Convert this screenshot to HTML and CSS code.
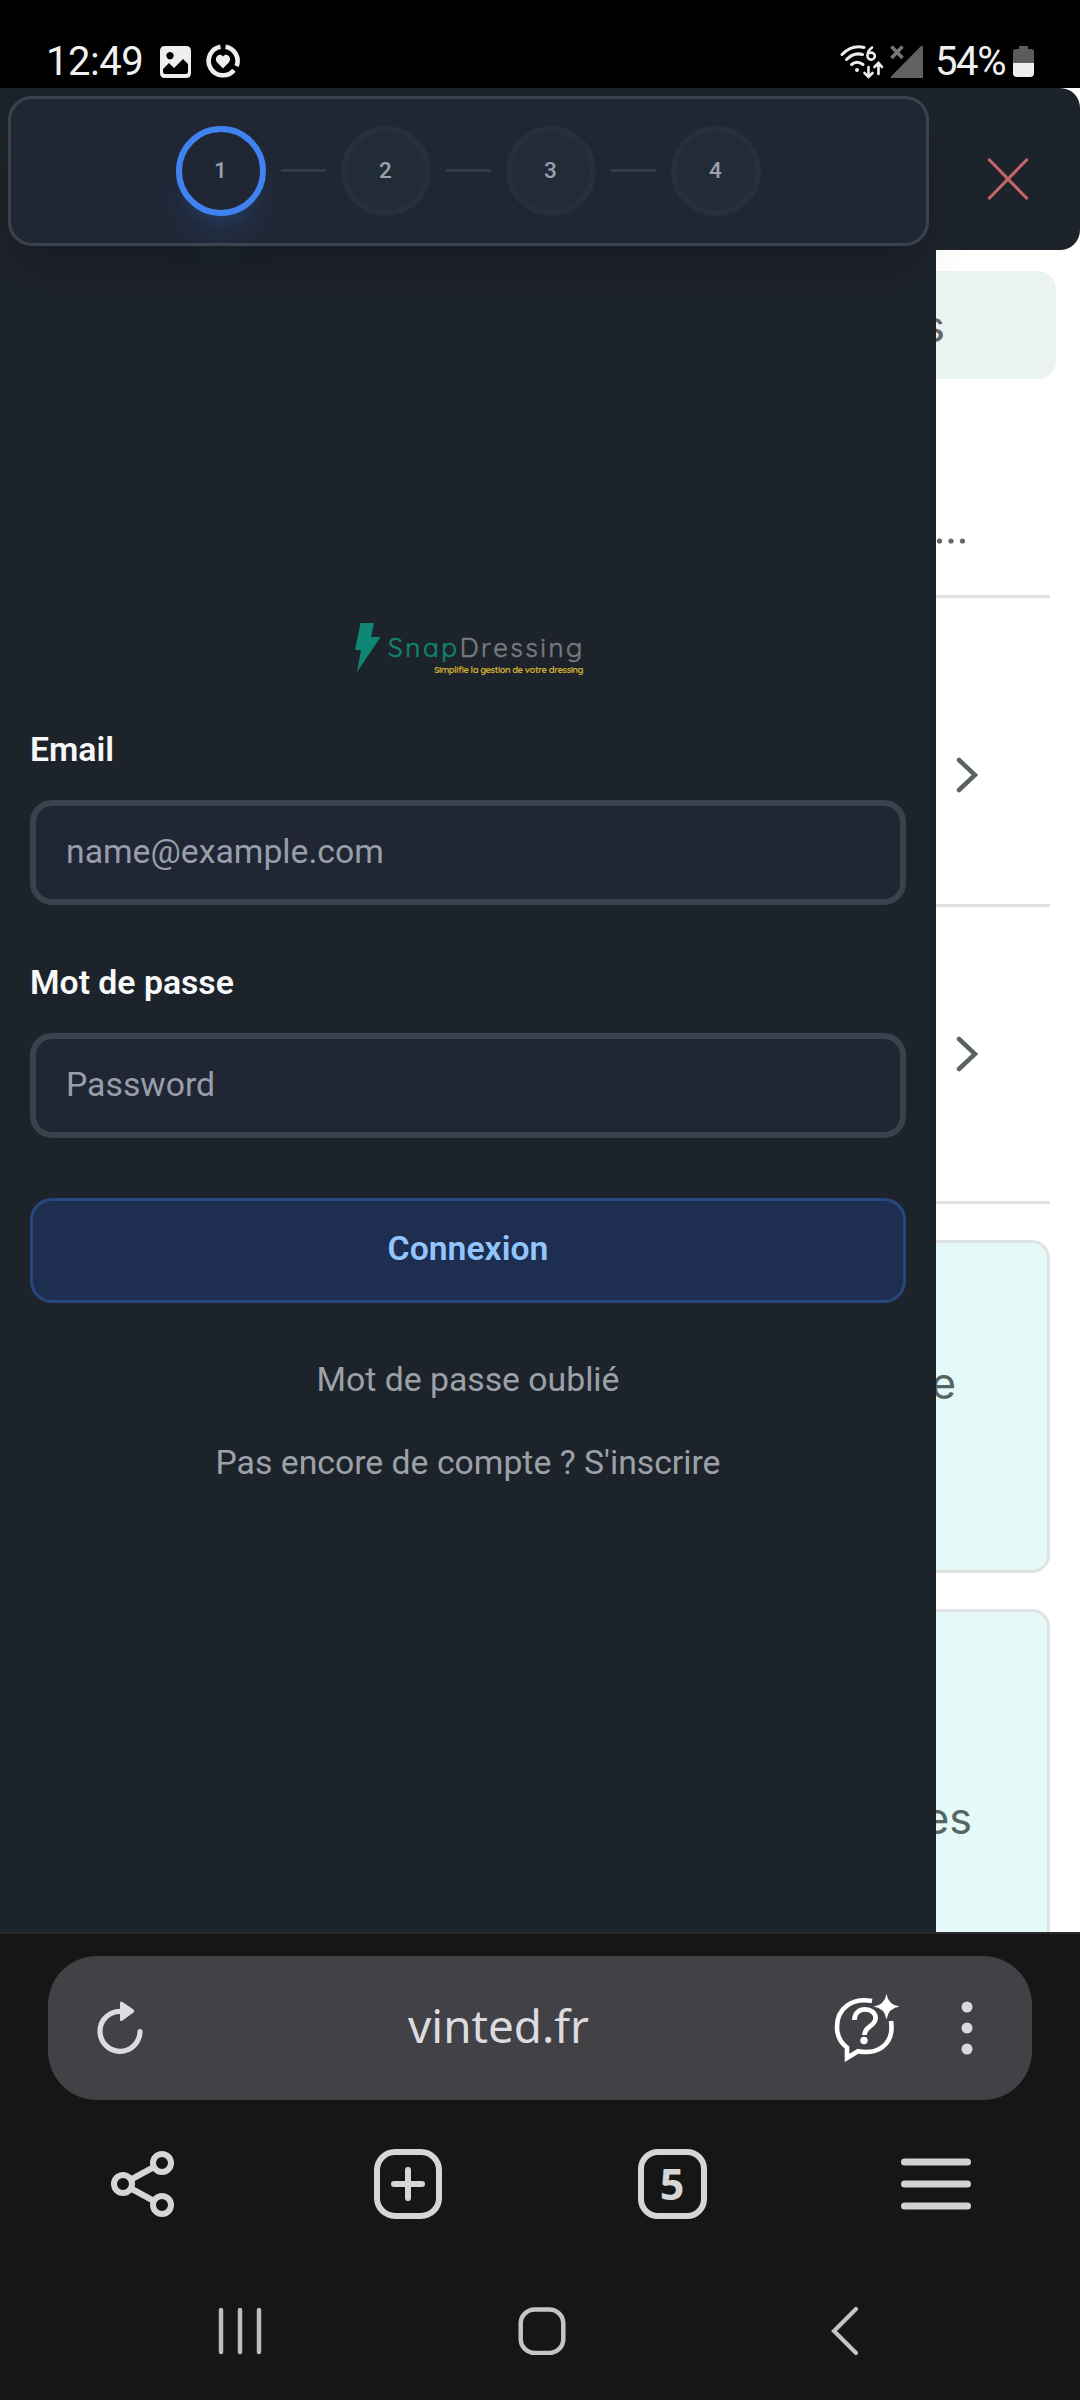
FILE: index.html
```html
<!DOCTYPE html>
<html lang="fr">
<head>
<meta charset="utf-8">
<title>SnapDressing</title>
<link rel="stylesheet" href="styles.css">
</head>
<body>
<div class="status">
  <div class="status-left">
    <span class="clock">12:49</span>
    <svg class="ic-image" width="31" height="32" viewBox="0 0 31 32"><path fill="#eee" fill-rule="evenodd" d="M5 0H26Q31 0 31 5V27Q31 32 26 32H5Q0 32 0 27V5Q0 0 5 0ZM10 6a3.7 3.7 0 1 0 .01 0ZM3 23V26Q3 28 5 28H26Q28 28 28 26V18L23 13L14 22L9 17Z"/></svg>
    <svg class="ic-heart" width="34" height="34" viewBox="0 0 34 34"><g fill="none" stroke="#eee" stroke-width="4.600"><path d="M14.500 2.700A14.400 14.400 0 1 0 28 26.200"/><path d="M19.500 2.700A14.400 14.400 0 0 1 30.600 22.100"/></g><path fill="#eee" d="M17 24.500L11 18.300C7.500 13.500 13.500 8 17 12.500C20.500 8 26.500 13.500 23 18.300Z"/></svg>
  </div>
  <div class="status-right">
    <svg class="ic-wifi" width="44" height="36" viewBox="0 0 44 36"><g fill="none" stroke="#eee" stroke-width="3" stroke-linecap="round"><path d="M2 10.500Q12 .5 24 3.500"/><path d="M6.500 15.500Q14 8 22.500 10.500"/><path d="M11.500 20.500Q17 16 23 20.500"/><path d="M32 3.500Q27.500 7 27.500 11.500A3.700 3.500 0 1 0 29.500 9" stroke-width="2.600"/><path d="M28.500 23V32M24.500 29L28.500 33L32.500 29M38.500 30V20M34.500 23L38.500 19L42 23" stroke-width="2.600"/></g><circle cx="17" cy="26" r="2" fill="#eee"/></svg>
    <svg class="ic-signal" width="33" height="34" viewBox="0 0 33 34"><path fill="#616161" d="M31 1Q33 0 33 2V32Q33 33 32 33H1.500Q0 33 1 31.500Z"/><path d="M1.500 1.500L12.500 13M12.500 1.500L1.500 13" stroke="#777" stroke-width="3.400"/></svg>
    <span class="percent">54%</span>
    <svg class="ic-battery" width="21" height="32" viewBox="0 0 21 32"><path fill="#5c5c5c" d="M6 4V1H15V4H18Q21 4 21 7V18H0V7Q0 4 3 4Z"/><path fill="#eee" d="M0 18H21V28Q21 32 17 32H4Q0 32 0 28Z"/></svg>
  </div>
</div>

<div class="view">
  <div class="drawer">
    <div class="steps">
      <div class="step active">1</div><div class="dash"></div>
      <div class="step">2</div><div class="dash"></div>
      <div class="step">3</div><div class="dash"></div>
      <div class="step">4</div>
    </div>
    <div class="logo">
      <svg class="bolt" width="26" height="49" viewBox="0 0 26 49"><path fill="#0f8674" d="M5.500 0H19L16 14H25.500L2 49L6 27H0Z"/></svg>
      <div class="brand">
        <div class="name"><span class="snap">Snap</span>Dressing</div>
        <div class="tagline">Simplifie la gestion de votre dressing</div>
      </div>
    </div>
    <form class="form">
      <label class="label" for="email">Email</label>
      <input class="input" id="email" type="text" placeholder="name@example.com">
      <label class="label" for="pw">Mot de passe</label>
      <input class="input" id="pw" type="password" placeholder="Password">
      <button class="btn" type="button">Connexion</button>
      <div class="link forgot">Mot de passe oublié</div>
      <div class="link">Pas encore de compte ? S'inscrire</div>
    </form>
  </div>

  <div class="side">
    <div class="close">
      <svg width="42" height="42" viewBox="0 0 42 42"><path d="M2.500 2L39.500 40M39.500 2L2.500 40" stroke="#c1666a" stroke-width="3.200" stroke-linecap="round"/></svg>
    </div>
    <div class="search"><span>s</span></div>
    <div class="row row-dots"><svg width="30" height="6" viewBox="0 0 30 6"><g fill="#666"><circle cx="3.500" cy="3" r="2.600"/><circle cx="15" cy="3" r="2.600"/><circle cx="26.500" cy="3" r="2.600"/></g></svg></div>
    <div class="row row-a"><svg width="22" height="36" viewBox="0 0 22 36"><path d="M3 3L19 18L3 33" fill="none" stroke="#5a6362" stroke-width="4.500" stroke-linecap="round"/></svg></div>
    <div class="row row-b"><svg width="22" height="36" viewBox="0 0 22 36"><path d="M3 3L19 18L3 33" fill="none" stroke="#5a6362" stroke-width="4.500" stroke-linecap="round"/></svg></div>
    <div class="card card-a"><span>e</span></div>
    <div class="card card-b"><span>es</span></div>
  </div>
</div>

<div class="browser">
  <div class="urlbar">
    <svg class="reload" width="48" height="54" viewBox="0 0 48 54"><path d="M24 11.300A20 20 0 1 0 44 31.500" fill="none" stroke="#dcdce0" stroke-width="5.200" stroke-linecap="round"/><path fill="#dcdce0" d="M24 3Q24 .5 26.500 2L37.500 9.500Q39 11 37.500 12.500L26.500 20.500Q24 22 24 19.500Z"/></svg>
    <div class="url">vinted.fr</div>
    <svg class="ask" width="66" height="68" viewBox="0 0 66 68"><path d="M38 7C18 3.500 3 14 3 33C3 42 7 49 13 53.500V64L24 57.200C44 61 57.500 50 57.500 34Q57.500 30.500 57 27" fill="none" stroke="#fff" stroke-width="4.600"/><path d="M20.500 26C20 11.500 42 12.500 41.500 24.500C41.200 32.500 30.500 32 30.500 41" fill="none" stroke="#fff" stroke-width="4.800"/><circle cx="30" cy="46.500" r="3.700" fill="#fff"/><path fill="#fff" d="M52.500 0Q54.500 11 65.500 12.500Q54.500 14 52.500 25.500Q50.500 14 39.500 12.500Q50.500 11 52.500 0Z"/></svg>
    <svg class="more" width="12" height="54" viewBox="0 0 12 54"><g fill="#d9d9dd"><circle cx="6" cy="6" r="5.500"/><circle cx="6" cy="27" r="5.500"/><circle cx="6" cy="48" r="5.500"/></g></svg>
  </div>
  <div class="tools">
    <div class="tool share"><svg width="66" height="70" viewBox="0 0 66 70"><g fill="none" stroke="#d6d6d6" stroke-width="6"><circle cx="53" cy="14" r="9"/><circle cx="14" cy="35" r="9"/><circle cx="53" cy="56" r="9"/><path d="M22 30.500L45 18M22 39.500L45 52"/></g></svg></div>
    <div class="tool"><svg width="70" height="70" viewBox="0 0 70 70"><g fill="none" stroke="#d6d6d6" stroke-width="6"><rect x="4" y="3" width="62" height="64" rx="18"/><path d="M35 21V49M21 35H49" stroke-linecap="round"/></g></svg></div>
    <div class="tool"><div class="tabs">5</div></div>
    <div class="tool"><svg width="72" height="52" viewBox="0 0 72 52"><path d="M4.500 4H67.500M4.500 26H67.500M4.500 48H67.500" stroke="#d2d2d2" stroke-width="7" stroke-linecap="round"/></svg></div>
  </div>
  <div class="nav">
    <svg width="44" height="48" viewBox="0 0 44 48"><path d="M3 3V45M22 3V45M41 3V45" stroke="#bdbdbd" stroke-width="4.500" stroke-linecap="round"/></svg>
    <svg class="home" width="48" height="48" viewBox="0 0 48 48"><rect x="2.700" y="2.500" width="42.600" height="43.500" rx="14" fill="none" stroke="#c4c4c4" stroke-width="4.500"/></svg>
    <svg width="30" height="50" viewBox="0 0 30 50"><path d="M26 3L4 25L26 47" fill="none" stroke="#c4c4c4" stroke-width="4.200" stroke-linecap="round"/></svg>
  </div>
</div>
</body>
</html>
```
FILE: styles.css
```css
* { box-sizing: border-box; }
body { margin: 0; width: 1080px; height: 2400px; overflow: hidden; background: #161616; font-family: Roboto, sans-serif; }
svg { display: block; flex: none; }

.status { height: 88px; background: #000; color: #f0f0f0; display: flex; justify-content: space-between; padding: 35px 46px 0 46px; font-size: 40px; line-height: 54px; }
.status-left, .status-right { display: flex; align-items: flex-start; }
.clock { width: 114px; letter-spacing: -0.5px; }
.ic-image { margin-top: 11px; }
.ic-heart { margin: 9px 0 0 15px; }
.ic-wifi { margin-top: 9px; }
.ic-signal { margin: 10px 0 0 6px; }
.percent { margin-left: 12px; width: 78px; letter-spacing: -1.4px; }
.ic-battery { margin-top: 10px; }

.view { height: 1844px; display: flex; background: #fff; overflow: hidden; }
.drawer { width: 936px; background: #1d232a; padding: 8px 7px 0 8px; }
.steps { height: 150px; border: 3px solid #3a424e; border-radius: 24px; background: #202633; display: flex; justify-content: center; padding: 27px 1px 0 0; box-shadow: 0 28px 56px -14px rgba(0,0,0,.24); }
.step { width: 90px; height: 90px; border-radius: 50%; border: 6px solid #26303a; background: #222c37; color: #9aa1ae; font-size: 22.500px; font-weight: 500; line-height: 76px; text-align: center; }
.active { border-color: #4083f0; background: #202633; box-shadow: 0 28px 42px -8px rgba(59,130,246,.17), 0 11px 17px -11px rgba(59,130,246,.2); }
.dash { width: 45px; height: 3px; margin: 43px 15px 0; background: #343b47; }

.logo { display: flex; margin: 377px 0 0 347px; height: 51px; }
.brand { width: 196px; margin: 9px 0 0 7px; font-family: Quicksand, Comfortaa, Lato, sans-serif; }
.name { color: #77797e; font-size: 26px; line-height: 32px; letter-spacing: 2.650px; white-space: nowrap; -webkit-text-stroke: .6px currentColor; }
.snap { color: #128270; }
.tagline { width: 195px; color: #d0ad35; font-size: 9.300px; line-height: 12px; letter-spacing: -.45px; text-align: right; font-weight: 700; white-space: nowrap; }

.form { margin: 0 23px 0 22px; display: flex; flex-direction: column; }
.label { color: #f8f8f9; font-size: 33.750px; font-weight: 600; line-height: 50px; margin-top: 51px; height: 75px; }
.input { display: block; width: 100%; height: 105px; border: 6px solid #3a424e; border-radius: 22px; background: #202633; padding: 0 30px 3px; font: 400 33.750px/48px Roboto, sans-serif; color: #9aa1ae; outline: 0; }
.input::placeholder { color: #989eac; opacity: 1; }
.input + .label { margin-top: 53px; }
.btn { height: 105px; margin-top: 60px; border: 3px solid #284680; border-radius: 22px; background: #1d2e50; color: #93c5fd; font: 600 33.750px/48px Roboto, sans-serif; padding: 0 0 3px; }
.link { color: #9ca1a8; text-align: center; font-size: 33.750px; line-height: 50px; }
.forgot { margin: 52px 0 33px; }

.side { width: 144px; display: flex; flex-direction: column; overflow: hidden; font-family: Inter, sans-serif; color: #5a6362; }
.close { height: 162px; flex: none; background: #1d232a; border-radius: 0 20px 20px 0; padding: 70px 0 0 51px; }
.search { height: 108px; flex: none; margin: 21px 24px 0 0; border-radius: 0 18px 18px 0; background: #ebf2f2; display: flex; justify-content: flex-end; padding-right: 111px; font-size: 44px; line-height: 111px; color: #666; }
.row { width: 114px; flex: none; border-bottom: 3px solid #e1e1e1; }
.row-dots { height: 219px; padding-top: 159px; }
.row-a { height: 309px; padding: 159px 0 0 20px; }
.row-b { height: 297px; padding: 129px 0 0 20px; }
.card { width: 114px; flex: none; border: 3px solid #dfe3e3; border-left: 0; border-radius: 0 18px 18px 0; background: #e5faf8; display: flex; justify-content: flex-end; font-size: 43px; line-height: 50px; color: #566564; }
.card-a { height: 333px; margin-top: 36px; padding: 115px 91px 0 0; }
.card-b { height: 400px; margin-top: 36px; padding: 181px 75px 0 0; }

.browser { height: 468px; background: #161616; border-top: 2px solid #29292b; padding: 22px 48px 0; }
.urlbar { height: 144px; border-radius: 49px; background: #424145; display: flex; align-items: center; padding: 0 59px 0 48px; }
.reload { margin-top: -3px; }
.url { flex: 1; margin-top: -6px; padding-left: 19px; text-align: center; color: #dcdce0; font: 400 45.800px/60px "Noto Sans", sans-serif; }
.ask { margin-right: 61px; }
.tools { height: 168px; margin: 0 -38px; display: grid; grid-template-columns: repeat(4, 264px); justify-content: center; align-items: center; }
.tool { display: flex; justify-content: center; }
.share { padding-right: 4px; }
.tabs { width: 69px; height: 70px; border: 6px solid #d6d6d6; border-radius: 20px; color: #d6d6d6; text-align: center; font: 700 43px/57px "Noto Sans", sans-serif; }
.nav { height: 126px; display: flex; justify-content: space-between; align-items: center; padding: 0 172px 0 170px; }
.home { margin: 0 4px 0 -4px; }
```
